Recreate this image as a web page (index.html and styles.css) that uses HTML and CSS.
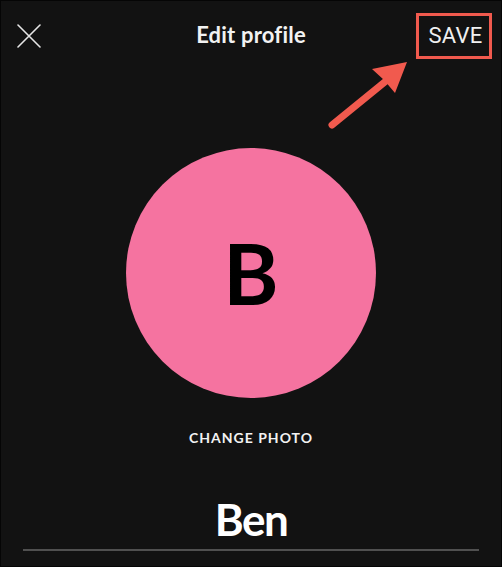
FILE: index.html
```html
<!DOCTYPE html>
<html lang="en">
<head>
<meta charset="utf-8">
<title>Edit profile</title>
<link rel="stylesheet" href="styles.css">
</head>
<body>
<div class="page">
  <header class="topbar">
    <div class="left">
      <svg class="close" width="24" height="24" viewBox="0 0 24 24" aria-hidden="true">
        <path d="M1 1 L23 23 M23 1 L1 23" stroke="#e6e6e6" stroke-width="1.6" fill="none" stroke-linecap="round"/>
      </svg>
    </div>
    <h1 class="title">Edit profile</h1>
    <div class="right">
      <span class="save">SAVE</span>
    </div>
  </header>
  <div class="avatar"><span class="initial">B</span></div>
  <div class="change">CHANGE PHOTO</div>
  <div class="name">Ben</div>
  <div class="rule"></div>
  <svg class="arrow" width="95" height="80" viewBox="320 55 95 80" aria-hidden="true">
    <line x1="332" y1="125" x2="386" y2="81" stroke="#f15a4e" stroke-width="7" stroke-linecap="round"/>
    <polygon points="407,62 372,69 384,80 395,93" fill="#f15a4e"/>
  </svg>
</div>
</body>
</html>
```

FILE: styles.css
```css
html, body {
  margin: 0;
  padding: 0;
  background: #121212;
}
.page {
  position: relative;
  width: 502px;
  height: 567px;
  box-sizing: border-box;
  border: 1px solid #050505;
  background: #121212;
  display: flex;
  flex-direction: column;
  align-items: center;
  font-family: Lato, "Noto Sans", sans-serif;
  color: #fff;
}
.topbar {
  width: 100%;
  height: 70px;
  display: grid;
  grid-template-columns: 1fr auto 1fr;
  align-items: center;
}
.left {
  padding-left: 16px;
  display: flex;
  align-items: center;
}
.close {
  display: block;
  margin-top: -1px;
}
.title {
  margin: 0;
  margin-top: -3px;
  font-size: 22px;
  font-weight: 700;
  color: #f2f2f2;
  letter-spacing: 0.2px;
}
.right {
  display: flex;
  justify-content: flex-end;
  padding-right: 9px;
}
.save {
  box-sizing: border-box;
  width: 76px;
  height: 46px;
  margin-top: -1px;
  border: 3px solid #f15a4e;
  display: flex;
  align-items: center;
  justify-content: center;
  padding-left: 3px;
  font-family: Roboto, "Liberation Sans", sans-serif;
  font-size: 22px;
  font-weight: 400;
  color: #f0f0f0;
  letter-spacing: 0.2px;
}
.avatar {
  margin-top: 77px;
  width: 250px;
  height: 250px;
  border-radius: 50%;
  background: #f573a0;
  display: flex;
  align-items: center;
  justify-content: center;
}
.initial {
  font-size: 84px;
  font-weight: 700;
  color: #000;
  line-height: 1;
  margin-top: -1px;
}
.change {
  margin-top: 31px;
  font-size: 14px;
  line-height: 17px;
  font-weight: 700;
  letter-spacing: 1px;
  color: #f2f2f2;
}
.name {
  margin-top: 47px;
  font-size: 44px;
  line-height: 53px;
  font-weight: 700;
  color: #fff;
  letter-spacing: -1.5px;
}
.rule {
  margin-top: 3px;
  width: 456px;
  height: 2px;
  background: #505050;
}
.arrow {
  position: absolute;
  left: 319px;
  top: 54px;
  pointer-events: none;
}
```
